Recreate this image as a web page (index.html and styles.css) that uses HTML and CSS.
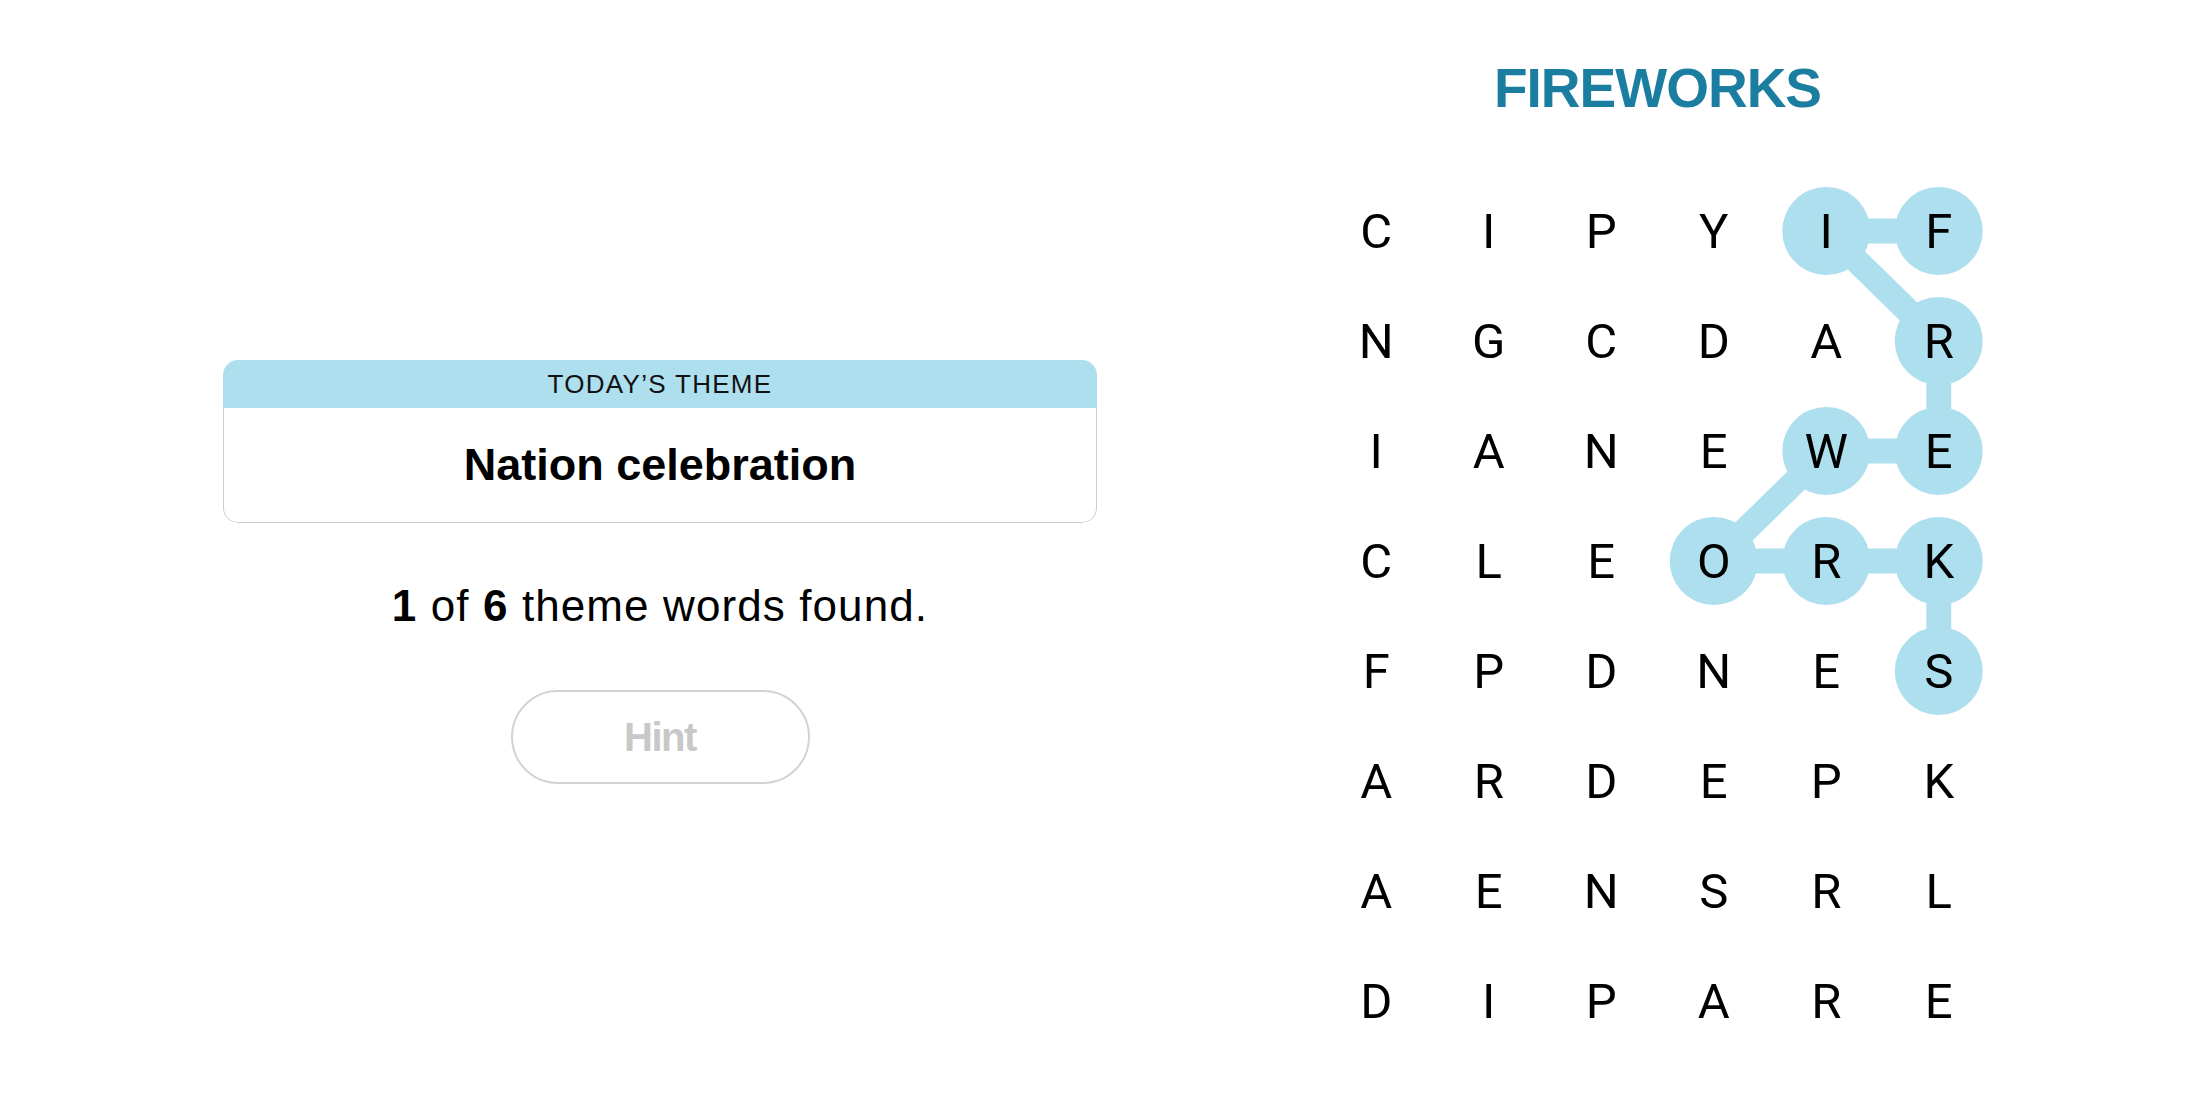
FILE: index.html
```html
<!DOCTYPE html>
<html lang="en">
<head>
    <meta charset="UTF-8">
    <meta name="viewport" content="width=device-width, initial-scale=1.0">
    <title>Strands</title>
    <link rel="stylesheet" href="styles.css">
</head>
<body>
    <div class="page">
        <section class="info">
            <div class="theme-card">
                <div class="theme-label">TODAY’S THEME</div>
                <div class="theme-name">Nation celebration</div>
            </div>
            <p class="progress"><b>1</b> of <b>6</b> theme words found.</p>
            <button class="hint-btn" disabled>Hint</button>
        </section>

        <section class="board">
            <h1 class="found-word">FIREWORKS</h1>
            <div class="grid">
                <!-- highlighted path for the found word -->
                <svg class="path" viewBox="0 0 675 880" width="675" height="880">
                    <g stroke="#aedfee" stroke-width="25" fill="none">
                        <line x1="618.75" y1="55" x2="506.25" y2="55"/>
                        <line x1="506.25" y1="55" x2="618.75" y2="165"/>
                        <line x1="618.75" y1="165" x2="618.75" y2="275"/>
                        <line x1="618.75" y1="275" x2="506.25" y2="275"/>
                        <line x1="506.25" y1="275" x2="393.75" y2="385"/>
                        <line x1="393.75" y1="385" x2="618.75" y2="385"/>
                        <line x1="618.75" y1="385" x2="618.75" y2="495"/>
                    </g>
                    <g fill="#aedfee">
                        <circle cx="618.75" cy="55" r="44"/>
                        <circle cx="506.25" cy="55" r="44"/>
                        <circle cx="618.75" cy="165" r="44"/>
                        <circle cx="618.75" cy="275" r="44"/>
                        <circle cx="506.25" cy="275" r="44"/>
                        <circle cx="393.75" cy="385" r="44"/>
                        <circle cx="506.25" cy="385" r="44"/>
                        <circle cx="618.75" cy="385" r="44"/>
                        <circle cx="618.75" cy="495" r="44"/>
                    </g>
                </svg>

                <span class="cell">C</span><span class="cell">I</span><span class="cell">P</span><span class="cell">Y</span><span class="cell">I</span><span class="cell">F</span>
                <span class="cell">N</span><span class="cell">G</span><span class="cell">C</span><span class="cell">D</span><span class="cell">A</span><span class="cell">R</span>
                <span class="cell">I</span><span class="cell">A</span><span class="cell">N</span><span class="cell">E</span><span class="cell">W</span><span class="cell">E</span>
                <span class="cell">C</span><span class="cell">L</span><span class="cell">E</span><span class="cell">O</span><span class="cell">R</span><span class="cell">K</span>
                <span class="cell">F</span><span class="cell">P</span><span class="cell">D</span><span class="cell">N</span><span class="cell">E</span><span class="cell">S</span>
                <span class="cell">A</span><span class="cell">R</span><span class="cell">D</span><span class="cell">E</span><span class="cell">P</span><span class="cell">K</span>
                <span class="cell">A</span><span class="cell">E</span><span class="cell">N</span><span class="cell">S</span><span class="cell">R</span><span class="cell">L</span>
                <span class="cell">D</span><span class="cell">I</span><span class="cell">P</span><span class="cell">A</span><span class="cell">R</span><span class="cell">E</span>
            </div>
        </section>
    </div>
</body>
</html>
```

FILE: styles.css
```css
body {
    margin: 0;
    font-family: 'Liberation Sans', Arial, sans-serif;
    color: #000;
    background: #fff;
}

.page {
    display: flex;
    height: 1100px;
}

/* left side: theme card, progress and hint */
.info {
    width: 1320px;
    padding-top: 360px;
    box-sizing: border-box;
    display: flex;
    flex-direction: column;
    align-items: center;
}

.theme-card {
    width: 874px;
    border-radius: 15px;
    overflow: hidden;
}

.theme-label {
    height: 48px;
    background: #aedfee;
    display: flex;
    align-items: center;
    justify-content: center;
    font-size: 26px;
    letter-spacing: 1.3px;
    color: #121212;
}

.theme-name {
    height: 115px;
    box-sizing: border-box;
    border: 1.5px solid #cccccc;
    border-top: none;
    border-radius: 0 0 15px 15px;
    display: flex;
    align-items: center;
    justify-content: center;
    font-size: 45px;
    font-weight: bold;
}

.progress {
    margin: 59px 0 0;
    font-size: 44px;
    line-height: 48px;
    letter-spacing: 1.1px;
}

.hint-btn {
    margin-top: 60px;
    width: 299px;
    height: 94px;
    border: 2px solid #d3d3d3;
    border-radius: 47px;
    background: #fff;
    font-family: 'Liberation Sans', sans-serif;
    font-size: 40px;
    font-weight: bold;
    letter-spacing: -1.5px;
    color: #c8c8c8;
}

/* right side: letter board */
.board {
    width: 675px;
    display: flex;
    flex-direction: column;
    align-items: center;
}

.found-word {
    margin: 56px 0 56px;
    font-size: 55px;
    line-height: 64px;
    letter-spacing: -1px;
    color: #1b7ea1;
}

.grid {
    position: relative;
    display: grid;
    grid-template-columns: repeat(6, 112.5px);
    grid-auto-rows: 110px;
}

.path {
    position: absolute;
    left: 0;
    top: 0;
}

.cell {
    position: relative;
    display: flex;
    align-items: center;
    justify-content: center;
    font-family: Roboto, 'Liberation Sans', sans-serif;
    font-size: 49px;
}
```
